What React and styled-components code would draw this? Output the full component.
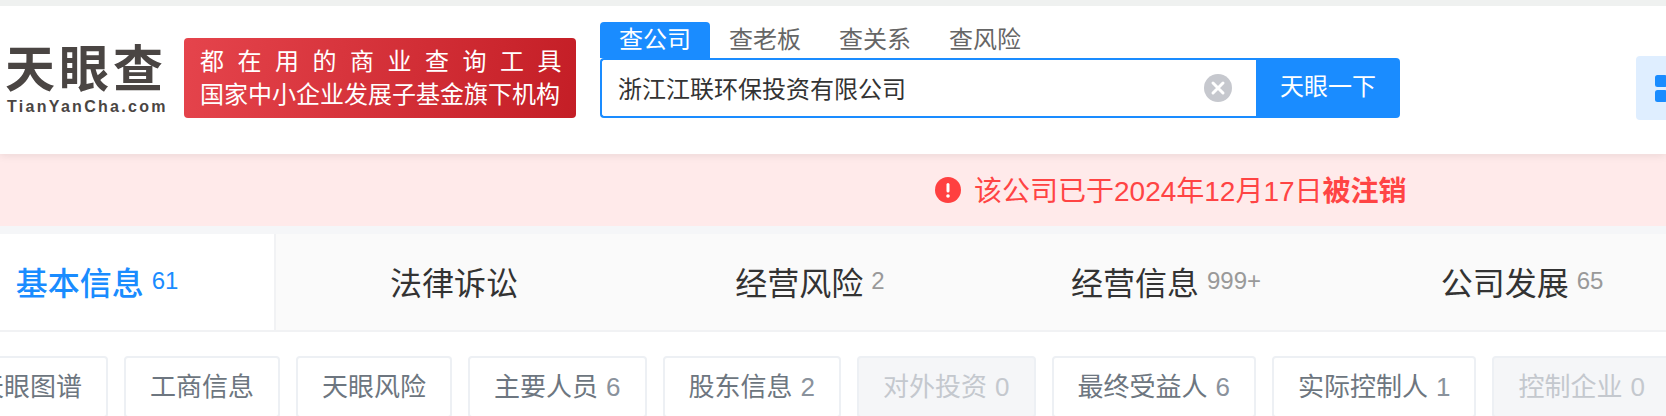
import styled, { createGlobalStyle } from 'styled-components';

const FONT = '"Liberation Sans", "Noto Sans CJK SC", sans-serif';
const BLUE = '#1a8cff';

const GlobalStyle = createGlobalStyle`
  html, body {
    margin: 0;
    padding: 0;
    height: 416px;
    overflow: hidden;
    background: #fff;
    font-family: ${FONT};
  }
  * {
    box-sizing: border-box;
  }
`;

const Page = styled.div`
  width: 1666px;
  height: 416px;
  overflow: hidden;
  background: #fff;
  border-top: 6px solid #eff1f0;
`;

const Header = styled.header`
  position: relative;
  z-index: 2;
  display: flex;
  align-items: flex-start;
  height: 148px;
  padding: 16px 0 0 6px;
  background: #fff;
  box-shadow: 0 2px 8px rgba(0, 0, 0, 0.08);
  overflow: hidden;
`;

const Logo = styled.div`
  flex: none;
  width: 160px;
  margin-top: 21px;
  margin-right: 18px;
  color: #4a4543;
`;

const LogoMark = styled.div`
  height: 54px;
  margin-left: -1px;
  font-size: 50px;
  line-height: 54px;
  font-weight: 700;
  letter-spacing: 4px;
  white-space: nowrap;
`;

const LogoDomain = styled.div`
  margin-top: 2px;
  padding-left: 1px;
  font-size: 16px;
  line-height: 16px;
  font-weight: 700;
  letter-spacing: 2.3px;
  white-space: nowrap;
`;

const Slogan = styled.div`
  flex: none;
  width: 392px;
  height: 80px;
  margin-top: 16px;
  margin-right: 24px;
  padding: 7px 0 0 16px;
  border-radius: 4px;
  background: linear-gradient(100deg, #e5444c 0%, #c41e26 100%);
  color: #fff;
  font-size: 24px;
  line-height: 33px;
  white-space: nowrap;
`;

const SloganLine = styled.div`
  letter-spacing: ${(props) => props.$spacing || 0}px;
`;

const Search = styled.div`
  flex: none;
  width: 800px;
`;

const SearchTabs = styled.div`
  display: flex;
  height: 36px;
`;

const SearchTab = styled.div`
  width: 110px;
  padding-top: 2px;
  border-radius: 4px 4px 0 0;
  background: ${(props) => (props.$active ? BLUE : 'transparent')};
  color: ${(props) => (props.$active ? '#fff' : '#666')};
  font-size: 24px;
  line-height: 32px;
  text-align: center;
`;

const SearchRow = styled.div`
  display: flex;
  height: 60px;
`;

const SearchInput = styled.div`
  flex: 1;
  display: flex;
  align-items: center;
  justify-content: space-between;
  padding: 0 24px 0 16px;
  border: 2px solid ${BLUE};
  border-right: none;
  border-radius: 4px 0 0 4px;
  color: #333;
  font-size: 24px;
`;

const SearchValue = styled.span`
  margin-top: -2px;
`;

const SearchButton = styled.div`
  flex: none;
  width: 144px;
  border-radius: 0 4px 4px 0;
  background: ${BLUE};
  color: #fff;
  font-size: 24px;
  line-height: 58px;
  text-align: center;
`;

const Launcher = styled.div`
  flex: none;
  width: 64px;
  height: 64px;
  margin-top: 34px;
  margin-left: 236px;
  padding: 19px 0 0 19px;
  border-radius: 4px;
  background: #dfeeff;
`;

const Notice = styled.div`
  display: flex;
  align-items: center;
  gap: 13px;
  height: 72px;
  padding-left: 935px;
  background: #ffeaea;
  color: #ff4444;
  font-size: 28px;
  white-space: nowrap;
`;

const NoticeText = styled.span`
  margin-top: -2px;
`;

const NoticeStrong = styled.b`
  font-weight: 700;
`;

const Divider = styled.div`
  height: 8px;
  background: #f5f6f8;
`;

const MainTabs = styled.nav`
  display: flex;
  width: 1780px;
  height: 98px;
  margin-left: -80px;
  border-bottom: 2px solid #f1f2f4;
  background: #fafafa;
`;

const MainTab = styled.div`
  flex: none;
  display: flex;
  align-items: center;
  justify-content: center;
  width: 356px;
  padding-bottom: 2px;
  border-right: ${(props) => (props.$active ? '2px solid #f1f2f4' : 'none')};
  background: ${(props) => (props.$active ? '#fff' : 'transparent')};
  color: ${(props) => (props.$active ? BLUE : '#333')};
  font-size: 32px;
  font-weight: ${(props) => (props.$active ? 500 : 400)};
  white-space: nowrap;
`;

const MainCount = styled.span`
  margin-left: 8px;
  color: ${(props) => (props.$active ? BLUE : '#999')};
  font-size: 24px;
  font-weight: 400;
`;

const SubTabs = styled.div`
  display: flex;
  gap: 16px;
  width: 1800px;
  margin-top: 24px;
  margin-left: -48px;
`;

const SubTab = styled.div`
  flex: none;
  height: 62px;
  padding: 0 24px;
  border: 2px solid #edf0f4;
  border-radius: 4px;
  background: ${(props) => (props.$disabled ? '#f5f6f8' : '#fff')};
  color: ${(props) => (props.$disabled ? '#c4c8ce' : '#6d7680')};
  font-size: 26px;
  line-height: 58px;
  white-space: nowrap;
`;

const SubCount = styled.span`
  margin-left: 8px;
  color: ${(props) => (props.$disabled ? '#c4c8ce' : '#8a929c')};
`;

const ClearIcon = () => (
  <svg width="28" height="28" viewBox="0 0 28 28">
    <circle cx="14" cy="14" r="14" fill="#c6c8ce" />
    <path d="M9 9l10 10M19 9L9 19" stroke="#fff" strokeWidth="3" strokeLinecap="round" />
  </svg>
);

const GridIcon = () => (
  <svg width="27" height="27" viewBox="0 0 27 27" fill={BLUE}>
    <rect width="12" height="12" rx="2.5" />
    <rect y="15" width="12" height="12" rx="2.5" />
    <rect x="15" width="12" height="12" rx="2.5" />
    <rect x="15" y="15" width="12" height="12" rx="2.5" />
  </svg>
);

const AlertIcon = () => (
  <svg width="26" height="26" viewBox="0 0 26 26">
    <circle cx="13" cy="13" r="13" fill="#ff4040" />
    <rect x="11.5" y="6" width="3" height="9.5" rx="1.5" fill="#fff" />
    <circle cx="13" cy="19" r="1.8" fill="#fff" />
  </svg>
);

const searchTabs = ['查公司', '查老板', '查关系', '查风险'];

const mainTabs = [
  { title: '基本信息', count: '61', active: true },
  { title: '法律诉讼' },
  { title: '经营风险', count: '2' },
  { title: '经营信息', count: '999+' },
  { title: '公司发展', count: '65' },
];

const subTabs = [
  { title: '天眼图谱' },
  { title: '工商信息' },
  { title: '天眼风险' },
  { title: '主要人员', count: 6 },
  { title: '股东信息', count: 2 },
  { title: '对外投资', count: 0, disabled: true },
  { title: '最终受益人', count: 6 },
  { title: '实际控制人', count: 1 },
  { title: '控制企业', count: 0, disabled: true },
];

export default function App() {
  return (
    <Page>
      <GlobalStyle />
      <Header>
        <Logo>
          <LogoMark>天眼查</LogoMark>
          <LogoDomain>TianYanCha.com</LogoDomain>
        </Logo>
        <Slogan>
          <SloganLine $spacing={13.5}>都在用的商业查询工具</SloganLine>
          <SloganLine>国家中小企业发展子基金旗下机构</SloganLine>
        </Slogan>
        <Search>
          <SearchTabs>
            {searchTabs.map((tab, i) => (
              <SearchTab key={tab} $active={i === 0}>
                {tab}
              </SearchTab>
            ))}
          </SearchTabs>
          <SearchRow>
            <SearchInput>
              <SearchValue>浙江江联环保投资有限公司</SearchValue>
              <ClearIcon />
            </SearchInput>
            <SearchButton>天眼一下</SearchButton>
          </SearchRow>
        </Search>
        <Launcher>
          <GridIcon />
        </Launcher>
      </Header>
      <Notice>
        <AlertIcon />
        <NoticeText>
          该公司已于2024年12月17日<NoticeStrong>被注销</NoticeStrong>
        </NoticeText>
      </Notice>
      <Divider />
      <MainTabs>
        {mainTabs.map((tab) => (
          <MainTab key={tab.title} $active={tab.active}>
            {tab.title}
            {tab.count && <MainCount $active={tab.active}>{tab.count}</MainCount>}
          </MainTab>
        ))}
      </MainTabs>
      <SubTabs>
        {subTabs.map((tab) => (
          <SubTab key={tab.title} $disabled={tab.disabled}>
            {tab.title}
            {tab.count !== undefined && <SubCount $disabled={tab.disabled}>{tab.count}</SubCount>}
          </SubTab>
        ))}
      </SubTabs>
    </Page>
  );
}
